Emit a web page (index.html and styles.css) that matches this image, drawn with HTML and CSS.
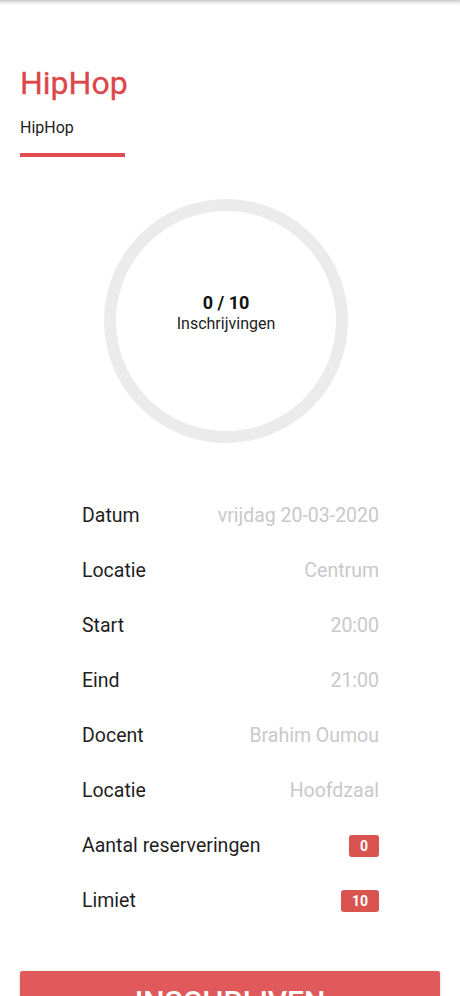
FILE: index.html
```html
<!DOCTYPE html>
<html lang="nl">
  <head>
    <meta charset="UTF-8" />
    <meta name="viewport" content="width=device-width, initial-scale=1.0" />
    <title>HipHop</title>
    <link rel="stylesheet" href="styles.css">
  </head>
  <body>
    <div class="topbar-shadow"></div>

    <div class="container">
      <!-- Les titel -->
      <div class="lesson-header">
        <h1>HipHop</h1>
        <p class="subtitle">HipHop</p>
        <div class="underline"></div>
      </div>

      <!-- Inschrijvingen teller -->
      <div class="counter-wrap">
        <div class="counter">
          <span class="counter-value">0 / 10</span>
          <span class="counter-label">Inschrijvingen</span>
        </div>
      </div>

      <!-- Details -->
      <ul class="details">
        <li><span class="label">Datum</span><span class="value">vrijdag 20-03-2020</span></li>
        <li><span class="label">Locatie</span><span class="value">Centrum</span></li>
        <li><span class="label">Start</span><span class="value">20:00</span></li>
        <li><span class="label">Eind</span><span class="value">21:00</span></li>
        <li><span class="label">Docent</span><span class="value">Brahim Oumou</span></li>
        <li><span class="label">Locatie</span><span class="value">Hoofdzaal</span></li>
        <li><span class="label">Aantal reserveringen</span><span class="badge">0</span></li>
        <li><span class="label">Limiet</span><span class="badge">10</span></li>
      </ul>

      <button class="signup" type="button">Inschrijven</button>
    </div>
  </body>
</html>
```

FILE: styles.css
```css
body {
  font-family: Roboto, "Liberation Sans", Arial, sans-serif;
  background-color: #fff;
  color: #222;
  margin: 0;
  padding: 0;
}

.topbar-shadow {
  height: 6px;
  background: linear-gradient(#c9c9c9, #f4f4f4 60%, #fff);
}

.container {
  padding: 58px 20px 0;
}

h1 {
  font-size: 32px;
  line-height: 38px;
  font-weight: 400;
  color: #dc474c;
  margin: 0;
  -webkit-text-stroke: 0.3px #dc474c;
}

.subtitle {
  font-size: 16px;
  line-height: 20px;
  margin: 16px 0 0;
  color: #1d1d1d;
}

.underline {
  width: 105px;
  height: 4px;
  margin-top: 15px;
  background-color: #de4b50;
}

.counter-wrap {
  display: flex;
  justify-content: center;
  padding-right: 8px;
  margin-top: 42px;
}

.counter {
  width: 220px;
  height: 220px;
  border: 12px solid #ebebeb;
  border-radius: 50%;
  display: flex;
  flex-direction: column;
  align-items: center;
  justify-content: center;
}

.counter-value {
  font-size: 18px;
  font-weight: 700;
  line-height: 22px;
  color: #111;
  margin-top: -17px;
}

.counter-label {
  font-size: 16px;
  line-height: 20px;
  color: #1d1d1d;
}

.details {
  list-style-type: none;
  margin: 45px 0 0;
  padding: 0 61px 0 62px;
}

.details li {
  height: 55px;
  display: flex;
  align-items: center;
  justify-content: space-between;
  font-size: 19.5px;
}

.label {
  color: #1f1f1f;
}

.value {
  color: #c9c9c9;
}

.badge {
  background-color: #d9534f;
  color: #fff;
  font-size: 14px;
  font-weight: 700;
  line-height: 22px;
  padding: 0 11px;
  border-radius: 3px;
}

.signup {
  display: block;
  width: 100%;
  height: 60px;
  margin-top: 43px;
  background-color: #e05a5b;
  color: #fff;
  border: none;
  border-radius: 2px;
  font-family: inherit;
  font-size: 30px;
  font-weight: 500;
  text-transform: uppercase;
  box-shadow: 0 1px 3px rgba(0, 0, 0, 0.2);
  cursor: pointer;
}
```
